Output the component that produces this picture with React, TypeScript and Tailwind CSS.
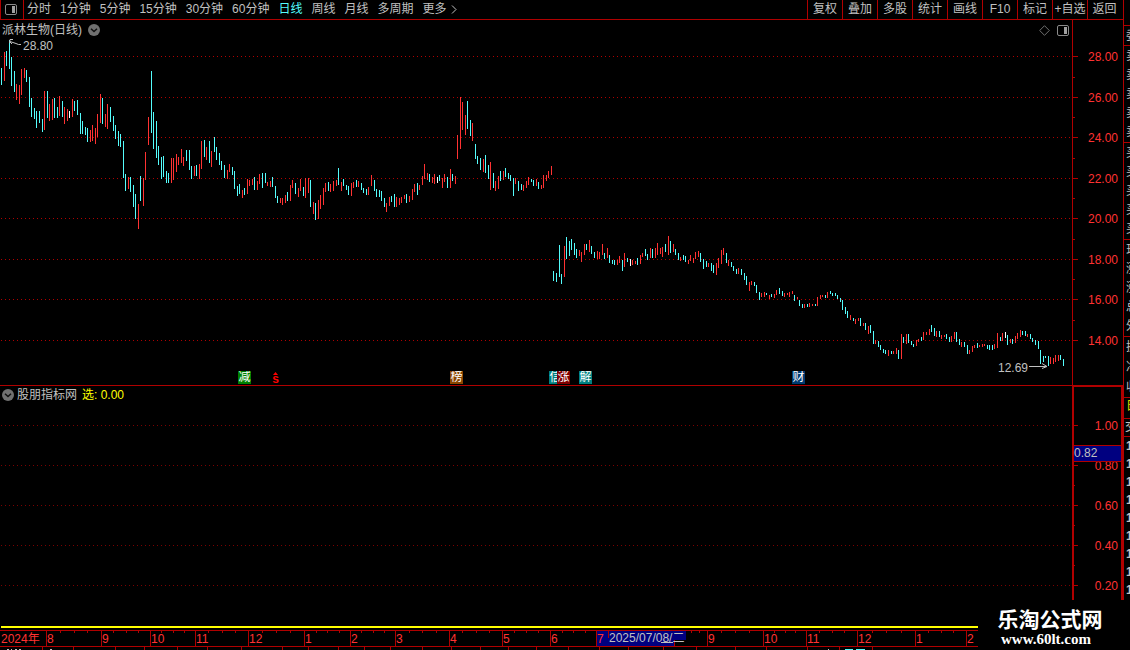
import React from "react";

const PRICE_WIDTH = 1072;
const PRICE_TOP = 20;
const PRICE_HEIGHT = 366;
const IND_TOP = 386;
const IND_HEIGHT = 244;
const AXIS_WIDTH = 1123;

const periods = ["分时", "1分钟", "5分钟", "15分钟", "30分钟", "60分钟", "日线", "周线", "月线", "多周期"];
const actions = ["复权", "叠加", "多股", "统计", "画线", "F10", "标记", "+自选", "返回"];

// Each bar: x, high, low, and r (up), c (down) or w (flat).
const bars = `
1 68 85 c;4 52 81 r;6 51 66 c;9 40 69 c;11 57 86 c;14 71 92 c;16 84 100 r;19 85 104 r;21 69 95 r;24 68 78 r;26 70 82 c;29 77 107 c;
31 98 117 c;34 108 119 c;36 111 128 c;39 111 123 c;42 119 132 c;44 91 130 r;47 91 118 c;49 104 121 r;52 99 120 r;54 98 118 c;57 107 118 c;
59 96 116 r;62 101 117 c;64 107 124 r;67 109 121 r;69 111 118 w;72 99 117 r;74 101 111 c;77 100 115 c;80 113 134 c;82 121 134 c;85 127 135 c;
87 128 142 c;90 130 142 r;92 125 141 r;95 128 144 r;97 114 137 r;100 94 123 r;102 98 124 c;105 114 127 r;107 104 129 r;110 107 122 c;
113 116 131 c;115 125 139 c;118 131 146 c;120 134 147 c;123 141 178 c;125 174 191 c;128 177 189 r;130 177 192 c;133 185 207 c;135 194 219 c;
138 204 229 r;140 176 201 c;143 178 206 r;145 152 180 r;148 117 145 r;151 71 133 c;153 112 149 c;156 121 158 c;158 146 165 c;161 157 179 c;
163 156 177 c;166 171 183 c;168 173 183 c;171 158 183 r;173 158 180 r;176 154 172 r;178 157 165 r;181 149 163 r;183 157 166 r;186 150 161 c;
189 150 170 c;191 166 179 c;194 166 176 r;196 165 176 c;199 164 179 r;201 141 169 r;204 140 157 c;206 147 160 r;209 141 163 c;211 151 167 r;
214 137 152 c;216 147 160 c;219 153 165 c;221 161 170 c;224 165 178 c;227 170 179 r;229 164 172 r;232 167 175 c;234 171 189 c;237 186 196 c;
239 184 194 c;242 190 198 r;244 188 195 c;247 179 194 r;249 180 186 r;252 179 185 r;254 177 190 c;257 181 190 r;259 174 184 r;262 173 188 c;
265 173 183 c;267 182 186 r;270 181 187 r;272 177 187 c;275 186 198 c;277 196 203 c;280 198 203 r;282 198 205 r;285 195 203 r;287 192 201 c;
290 185 201 r;292 180 188 r;295 183 194 c;298 188 197 r;300 179 191 r;303 187 196 c;305 178 198 r;308 178 193 r;310 180 207 c;313 202 214 r;
315 203 220 c;318 200 219 r;320 195 209 r;323 188 205 r;325 183 192 r;328 182 191 c;330 184 192 r;333 181 191 r;336 180 186 r;338 168 185 c;
341 182 191 r;343 179 186 c;346 185 190 c;348 186 195 c;351 183 196 r;353 182 188 r;356 180 187 c;358 181 187 r;361 183 190 c;363 188 193 c;
366 189 195 c;368 187 195 r;371 175 186 r;374 180 191 c;376 189 197 c;379 190 197 c;381 191 201 c;384 198 207 c;386 203 212 r;389 197 206 r;
391 196 202 c;394 194 207 c;396 197 207 r;399 198 205 r;401 197 203 r;404 195 199 r;406 194 203 c;409 196 202 r;412 189 200 r;414 184 192 r;
417 183 195 c;419 185 190 r;422 176 185 r;424 164 179 r;427 173 180 r;429 174 182 c;432 177 183 r;434 174 184 r;437 177 183 w;439 175 181 c;
442 178 188 r;444 174 182 r;447 177 188 c;450 169 188 r;452 174 181 c;455 176 184 r;457 135 159 r;460 97 149 r;462 102 130 r;465 115 135 r;
467 101 129 c;470 120 136 c;472 123 141 r;475 144 159 c;477 156 164 c;480 158 170 c;483 159 172 r;485 155 173 c;488 165 179 c;490 162 190 r;
493 173 188 c;495 181 191 r;498 176 189 r;500 171 181 c;503 171 180 r;505 168 177 c;508 173 179 c;510 175 181 c;513 178 196 c;515 178 184 r;
518 181 191 c;521 184 190 c;523 185 191 r;526 181 188 r;528 177 185 r;531 179 182 c;533 180 186 c;536 179 186 r;538 182 189 c;541 185 189 r;
543 175 188 r;546 175 181 r;548 171 178 r;551 166 175 r;553 271 281 c;556 273 282 c;559 245 277 c;561 274 284 c;564 246 277 r;566 237 259 c;
569 241 256 c;571 239 250 c;574 243 255 c;576 249 258 c;579 250 256 r;581 252 262 r;584 244 255 r;586 244 250 c;589 240 252 r;591 246 254 c;
594 252 258 c;597 251 259 r;599 252 259 r;602 244 255 r;604 253 259 c;607 248 258 r;609 255 263 c;612 260 264 c;614 260 265 c;617 260 265 r;
619 256 263 r;622 260 271 c;624 253 267 r;627 258 262 c;630 259 266 w;632 260 265 r;635 261 264 r;637 258 265 c;640 255 264 r;642 253 257 r;
645 249 256 c;647 254 260 c;650 248 258 r;652 249 258 c;655 248 258 r;657 243 255 r;660 248 254 r;662 247 257 r;665 244 252 c;668 236 255 r;
670 241 253 c;673 244 252 r;675 249 255 c;678 253 260 c;680 257 261 r;683 255 260 c;685 256 262 c;688 260 264 r;690 255 261 r;693 258 263 r;
695 252 259 r;698 251 257 r;700 253 262 c;703 259 269 c;706 261 267 c;708 263 267 r;711 263 271 c;713 265 273 c;716 263 275 r;718 258 268 r;
721 250 264 r;723 248 255 r;726 253 263 c;728 260 266 r;731 262 267 c;733 266 271 c;736 269 274 c;738 268 274 r;741 269 275 c;744 273 280 c;
746 276 285 c;749 282 291 r;751 281 285 r;754 282 286 c;756 285 293 c;759 292 300 c;761 293 297 r;764 292 297 r;766 293 295 c;769 295 299 r;
771 294 297 c;774 294 298 r;776 290 295 r;779 288 294 c;782 291 296 c;784 293 297 r;787 293 295 r;789 292 297 r;792 291 294 r;794 295 301 c;
797 297 299 r;799 300 306 c;802 304 308 c;804 304 308 r;807 304 307 c;809 303 307 r;812 304 306 r;815 304 306 c;817 297 306 r;820 295 299 r;
822 295 297 r;825 295 298 c;827 292 298 r;830 291 294 c;832 293 296 c;835 293 296 c;837 295 299 c;840 298 302 c;842 300 310 c;845 307 314 c;
847 311 318 c;850 315 320 r;853 318 321 c;855 319 324 r;858 318 321 r;860 318 326 c;863 323 326 r;865 323 330 c;868 326 334 r;870 325 333 c;
873 331 344 c;875 340 344 r;878 341 347 c;880 345 350 c;883 349 353 c;885 350 354 c;888 350 356 r;891 351 354 c;893 351 354 r;896 348 354 r;
898 350 359 c;901 334 359 r;903 337 343 c;906 334 344 r;908 334 343 c;911 341 345 c;913 344 347 c;916 340 346 r;918 339 342 r;921 337 341 c;
923 332 340 r;926 332 335 r;929 329 335 r;931 325 332 c;934 328 336 c;936 331 337 r;939 331 337 c;941 335 339 r;944 335 337 r;946 334 339 c;
949 337 342 c;951 336 342 r;954 332 339 r;956 332 342 c;959 339 345 c;961 342 347 r;964 342 347 c;967 345 354 c;969 350 354 r;972 346 352 r;
974 345 348 r;977 343 348 c;979 345 347 r;982 344 347 r;984 344 346 r;987 345 349 c;989 345 350 c;992 345 350 c;994 344 349 r;997 333 348 r;
1000 337 341 c;1002 333 341 r;1005 332 338 w;1007 335 345 c;1010 339 343 r;1012 339 344 c;1015 336 343 r;1017 333 339 r;1020 330 337 r;
1022 331 335 c;1025 331 336 c;1027 334 337 r;1030 334 339 c;1032 338 342 c;1035 340 345 c;1038 341 349 c;1040 350 364 c;1043 356 362 c;
1045 356 358 c;1048 356 366 c;1050 357 364 r;1053 358 364 r;1055 355 362 r;1058 355 361 r;1060 355 360 c;1063 359 366 c`
  .split(";")
  .map((s) => {
    const [x, a, b, k] = s.trim().split(" ");
    return { x: +x, hi: +a, lo: +b, k };
  });

const barColor: Record<string, string> = { r: "#ff3232", c: "#54fcfc", w: "#ffffff" };

const priceTicks = [
  { y: 56, t: "28.00" },
  { y: 97, t: "26.00" },
  { y: 137, t: "24.00" },
  { y: 178, t: "22.00" },
  { y: 218, t: "20.00" },
  { y: 259, t: "18.00" },
  { y: 299, t: "16.00" },
  { y: 340, t: "14.00" },
];
const priceMinor = [77, 117, 158, 198, 239, 279, 320];
const indTicks = [
  { y: 425, t: "1.00" },
  { y: 465, t: "0.80" },
  { y: 505, t: "0.60" },
  { y: 545, t: "0.40" },
  { y: 585, t: "0.20" },
];
const indMinor = [485, 525, 565];

const months = [
  { x: 46, t: "8" },
  { x: 101, t: "9" },
  { x: 150, t: "10" },
  { x: 195, t: "11" },
  { x: 248, t: "12" },
  { x: 304, t: "1" },
  { x: 350, t: "2" },
  { x: 395, t: "3" },
  { x: 449, t: "4" },
  { x: 502, t: "5" },
  { x: 550, t: "6" },
  { x: 596, t: "" },
  { x: 674, t: "" },
  { x: 707, t: "9" },
  { x: 763, t: "10" },
  { x: 806, t: "11" },
  { x: 857, t: "12" },
  { x: 915, t: "1" },
  { x: 966, t: "2" },
];
const weekTicks = months
  .slice(0, -1)
  .flatMap((m, i) => [1, 2, 3].map((k) => Math.round(m.x + ((months[i + 1].x - m.x) * k) / 4)));
const footerStops = [42, 73, 115, 144, 177, 207, 241, 282, 308, 338, 364, 390, 422, 451, 480, 508, 536, 568, 599, 628, 663, 696, 735, 766, 807, 839, 872];

const markers = [
  { x: 238, t: "减", c: "bg-[#008000] z-0" },
  { x: 450, t: "榜", c: "bg-[#8a4500] z-0" },
  { x: 549, t: "信", c: "bg-[#008080] z-0" },
  { x: 557, t: "涨", c: "bg-[#800000] z-10" },
  { x: 579, t: "解", c: "bg-[#008080] z-0" },
  { x: 792, t: "财", c: "bg-[#003a70] z-0" },
];

const quoteGroups = [
  { h: "h-5", rows: ["委"] },
  { h: "h-[97px]", rows: ["卖", "卖", "卖", "卖", "卖"] },
  { h: "h-[97px]", rows: ["买", "买", "买", "买", "买"] },
  { h: "h-[97px]", rows: ["现", "涨", "涨", "总", "外"] },
  { h: "h-[61px]", rows: ["换", "净", "收"] },
];

const left = (x: number, w: number) => ({ left: `${(x / w) * 100}%` });
const top = (y: number, start: number, h: number) => ({ top: `${((y - start) / h) * 100}%` });

function DottedLines({ ys }: { ys: number[] }) {
  return (
    <>
      {ys.map((y) => (
        <line key={y} x1={1} x2={PRICE_WIDTH} y1={y + 0.5} y2={y + 0.5} stroke="#b00000" strokeDasharray="1 3" />
      ))}
    </>
  );
}

function PanelIcon() {
  return (
    <svg width="12" height="11" viewBox="0 0 12 11" aria-hidden="true">
      <rect x="0.5" y="0.5" width="11" height="10" rx="1.5" fill="none" stroke="#8a8a8a" />
      <rect x="7" y="2" width="3" height="7" fill="#a0a0a0" />
    </svg>
  );
}

function DropIcon() {
  return (
    <svg width="12" height="12" viewBox="0 0 12 12" aria-hidden="true">
      <circle cx="6" cy="6" r="6" fill="#707070" />
      <path d="M3 4.7 6 7.5 9 4.7" fill="none" stroke="#101010" strokeWidth="1.5" />
    </svg>
  );
}

function Toolbar() {
  return (
    <nav className="flex h-5 shrink-0 border-b border-[#b00000] text-[#c0c0c0]">
      <button aria-label="面板" className="flex w-6 shrink-0 items-center justify-center border-x border-[#b00000] pr-[2px]">
        <PanelIcon />
      </button>
      <div className="flex flex-1 items-center gap-[9px] overflow-hidden pl-[3px] whitespace-nowrap">
        {periods.map((p) => (
          <button key={p} className={p === "日线" ? "text-[#54fcfc]" : ""}>
            {p}
          </button>
        ))}
        <button className="flex items-center gap-1">
          更多
          <svg width="6" height="9" viewBox="0 0 6 9" aria-hidden="true">
            <path d="M1 0.5 5 4.5 1 8.5" fill="none" stroke="#c0c0c0" />
          </svg>
        </button>
      </div>
      <div className="flex shrink-0">
        {actions.map((a) => (
          <button
            key={a}
            className="flex w-[35px] items-center justify-center border-l border-[#b00000] whitespace-nowrap last:w-9 last:pr-[2px]"
          >
            {a}
          </button>
        ))}
      </div>
    </nav>
  );
}

function PriceChart() {
  return (
    <section className="flex min-h-0 flex-[366]">
      <div className="relative min-w-0 flex-1">
        <svg
          className="absolute inset-0 h-full w-full"
          viewBox={`0 ${PRICE_TOP} ${PRICE_WIDTH} ${PRICE_HEIGHT}`}
          preserveAspectRatio="none"
          shapeRendering="crispEdges"
        >
          <DottedLines ys={priceTicks.map((t) => t.y)} />
          {bars.map((b) => (
            <rect key={b.x} x={b.x} y={b.hi} width={1} height={b.lo - b.hi} fill={barColor[b.k]} />
          ))}
          <rect x={0} y={385} width={PRICE_WIDTH} height={1} fill="#b00000" />
          <g fill="none" stroke="#c0c0c0" shapeRendering="auto">
            <path d="M21 44.5H18.5L16 43.5 10 41.5 M13 39.5H10L9.5 43 M10 42 12 44" />
            <path d="M1029 366.5H1047 M1042 363.5 1047 366.5 1042 368.5" />
          </g>
        </svg>
        <header className="relative flex items-center justify-between pt-[1px] pr-[3px] pl-[2px] leading-[18px] text-[#c0c0c0]">
          <h1 className="flex items-center gap-[6px]">
            派林生物(日线)
            <button aria-label="股票菜单">
              <DropIcon />
            </button>
          </h1>
          <div className="flex items-center gap-[7px]">
            <svg width="11" height="11" viewBox="0 0 11 11" aria-hidden="true">
              <path d="M5.5 0.7 10.3 5.5 5.5 10.3 0.7 5.5Z" fill="none" stroke="#707070" />
            </svg>
            <button aria-label="侧栏">
              <PanelIcon />
            </button>
          </div>
        </header>
        <span className="absolute -translate-y-1/2 text-[#c0c0c0]" style={{ ...left(23, PRICE_WIDTH), ...top(46, PRICE_TOP, PRICE_HEIGHT) }}>
          28.80
        </span>
        <span className="absolute -translate-y-1/2 text-[#c0c0c0]" style={{ ...left(998, PRICE_WIDTH), ...top(368, PRICE_TOP, PRICE_HEIGHT) }}>
          12.69
        </span>
        {markers.map((m) => (
          <span
            key={m.x}
            className={`absolute bottom-[2px] h-[13px] w-[13px] overflow-hidden text-center leading-[13px] text-white ${m.c}`}
            style={left(m.x, PRICE_WIDTH)}
          >
            {m.t}
          </span>
        ))}
        <span
          className="absolute bottom-[2px] flex w-[7px] flex-col items-center text-[12px] leading-[9px] font-bold text-[#ff0000]"
          style={left(272, PRICE_WIDTH)}
        >
          <svg width="5" height="3" viewBox="0 0 5 3" aria-hidden="true">
            <path d="M2.5 0 5 3H0Z" fill="#ff0000" />
          </svg>
          s
        </span>
      </div>
      <div className="relative w-[51px] shrink-0 border-b border-l border-[#b00000] text-[#ff3232]">
        <svg className="absolute inset-0 h-full w-full" viewBox={`0 ${PRICE_TOP} 50 365`} preserveAspectRatio="none" shapeRendering="crispEdges">
          {priceTicks.map((t) => (
            <rect key={t.y} x={0} y={t.y} width={5} height={1} fill="#b00000" />
          ))}
          {priceMinor.map((y) => (
            <rect key={y} x={0} y={y} width={2} height={1} fill="#b00000" />
          ))}
        </svg>
        {priceTicks.map((t) => (
          <span key={t.y} className="absolute right-[5px] -translate-y-1/2" style={top(t.y + 1, PRICE_TOP, 365)}>
            {t.t}
          </span>
        ))}
      </div>
    </section>
  );
}

function IndicatorChart() {
  return (
    <section className="flex min-h-0 flex-[244]">
      <div className="relative min-w-0 flex-1">
        <svg
          className="absolute inset-0 h-full w-full"
          viewBox={`0 ${IND_TOP} ${PRICE_WIDTH} ${IND_HEIGHT}`}
          preserveAspectRatio="none"
          shapeRendering="crispEdges"
        >
          <g opacity={0.7}>
            <DottedLines ys={indTicks.map((t) => t.y)} />
          </g>
          <rect x={1} y={626} width={PRICE_WIDTH - 1} height={2} fill="#ffff00" />
        </svg>
        <h2 className="relative flex items-center gap-[3px] pl-[2px] leading-[18px] text-[#c0c0c0]">
          <button aria-label="指标菜单">
            <DropIcon />
          </button>
          <span>股朋指标网</span>
          <span className="pl-[2px] text-[#ffff00]">选: 0.00</span>
        </h2>
      </div>
      <div className="relative w-[51px] shrink-0 border-x-2 border-t border-[#b00000] text-[#ff3232]">
        <svg className="absolute inset-0 h-full w-full" viewBox="0 387 47 243" preserveAspectRatio="none" shapeRendering="crispEdges">
          {indTicks.map((t) => (
            <rect key={t.y} x={0} y={t.y} width={4} height={1} fill="#b00000" />
          ))}
          {indMinor.map((y) => (
            <rect key={y} x={0} y={y} width={1} height={1} fill="#b00000" />
          ))}
        </svg>
        {indTicks.map((t) => (
          <span key={t.y} className="absolute right-[3px] -translate-y-1/2" style={top(t.y + 1, 387, 243)}>
            {t.t}
          </span>
        ))}
        <output
          className="absolute inset-x-0 flex h-[17px] items-center border-y border-[#b00000] bg-[#000080] text-[#c0c0c0]"
          style={top(445, 387, 243)}
        >
          0.82
        </output>
      </div>
    </section>
  );
}

function TimeAxis() {
  return (
    <div className="relative h-[17px] shrink-0 border-y border-[#b00000] text-[#ff3232]">
      <svg className="absolute inset-0 h-full w-full" viewBox={`0 0 ${AXIS_WIDTH} 15`} preserveAspectRatio="none" shapeRendering="crispEdges">
        {months.map((m) => (
          <rect key={m.x} x={m.x} y={0} width={1} height={15} fill="#b00000" />
        ))}
        {weekTicks.map((x) => (
          <rect key={x} x={x} y={0} width={1} height={2} fill="#b00000" />
        ))}
        <rect x={597} y={0} width={77} height={15} fill="#000080" />
        <rect x={674} y={0} width={12} height={9} fill="#000080" />
        <rect x={608} y={0} width={1} height={7} fill="#b00000" />
        <rect x={661} y={11} width={12} height={1} fill="#c0c0c0" />
      </svg>
      <span className="absolute leading-[16px]" style={left(1, AXIS_WIDTH)}>
        2024年
      </span>
      {months.map((m) => (
        <span key={m.x} className="absolute leading-[16px]" style={left(m.x + 1, AXIS_WIDTH)}>
          {m.t}
        </span>
      ))}
      <span className="absolute leading-[16px]" style={left(597, AXIS_WIDTH)}>
        7
      </span>
      <time className="absolute leading-[14px] whitespace-nowrap text-[#c0c0c0]" style={left(609, AXIS_WIDTH)}>
        2025/07/08/二
      </time>
    </div>
  );
}

function FooterEdge() {
  return (
    <svg className="h-[3px] w-full shrink-0" viewBox={`0 0 ${AXIS_WIDTH} 3`} preserveAspectRatio="none" shapeRendering="crispEdges" aria-hidden="true">
      {footerStops.map((x) => (
        <rect key={x} x={x} y={0} width={1} height={3} fill="#b00000" />
      ))}
      <path d="M7 2.5h2M11 2.5h1M15 2.5h2M19 2.5h2M50 2.5h2M828 2.5h1" stroke="#c0c0c0" />
      <path d="M845 2.5h8M856 2.5h9" stroke="#54fcfc" />
    </svg>
  );
}

function QuoteStrip() {
  return (
    <aside className="flex w-[7px] shrink-0 flex-col overflow-hidden border-l border-[#b00000] pt-[25px] text-[#c0c0c0]">
      {quoteGroups.map((g, i) => (
        <div key={i} className={`flex shrink-0 flex-col justify-around border-t border-[#b00000] pl-[2px] leading-[14px] ${g.h}`}>
          {g.rows.map((r, j) => (
            <span key={j} className="w-3">
              {r}
            </span>
          ))}
        </div>
      ))}
      <div className="h-[21px] shrink-0 border-t border-[#b00000] pl-[2px] text-[#e0e000]">
        <span>日</span>
      </div>
      <div className="h-[19px] shrink-0 border-y border-[#b00000] pl-[1px]">
        <span>交</span>
      </div>
      <div className="flex flex-col pl-[2px] leading-[18px] font-bold">
        {Array.from({ length: 9 }, (_, i) => (
          <span key={i}>1</span>
        ))}
      </div>
    </aside>
  );
}

export default function App() {
  return (
    <main className="flex h-screen overflow-hidden bg-black font-['Liberation_Sans','Noto_Sans_CJK_SC',sans-serif] text-[12px] leading-[17px]">
      <div className="flex min-w-0 flex-1 flex-col">
        <Toolbar />
        <PriceChart />
        <IndicatorChart />
        <TimeAxis />
        <FooterEdge />
      </div>
      <QuoteStrip />
      <div className="absolute right-0 bottom-0 z-20 flex h-[50px] w-[152px] flex-col items-center bg-black pt-[6px] pr-2 text-white">
        <strong className="font-['Noto_Sans_CJK_SC',sans-serif] text-[21px] leading-6 font-bold">乐淘公式网</strong>
        <a href="#home" className="pr-2 font-['Liberation_Serif',serif] text-[15px] leading-[18px] font-bold">
          www.60lt.com
        </a>
      </div>
    </main>
  );
}
